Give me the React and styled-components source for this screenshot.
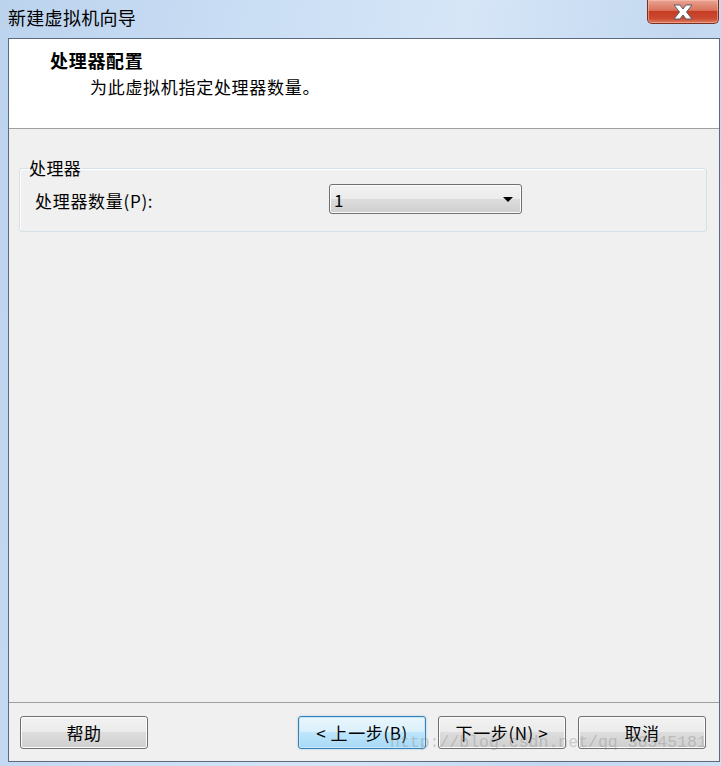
import React from "react";
import styled, { createGlobalStyle } from "styled-components";

const GlobalStyle = createGlobalStyle`
  html, body { margin: 0; padding: 0; background: #cfe0f4; }
  body {
    font-family: "Noto Sans CJK SC", "Noto Sans", "Liberation Sans", sans-serif;
    color: #000;
  }
`;

const Window = styled.div`
  position: relative;
  width: 721px;
  height: 766px;
  box-sizing: border-box;
  display: flex;
  flex-direction: column;
  padding: 0 1px 4px 8px;
  background: linear-gradient(
    100deg,
    #bcd3ee 0%,
    #cadef4 30%,
    #d6e6f7 55%,
    #c3d8f0 80%,
    #cde0f5 100%
  );
  overflow: hidden;
`;

const TitleBar = styled.div`
  height: 38px;
  flex: none;
  display: flex;
  justify-content: space-between;
  align-items: flex-start;
`;

const TitleText = styled.div`
  font-size: 18px;
  line-height: 24px;
  margin-top: 5px;
  letter-spacing: 0.3px;
  color: #000;
`;

const CloseButton = styled.div`
  width: 72px;
  height: 24px;
  margin-right: 1px;
  box-sizing: border-box;
  border: 1px solid #7a2f22;
  border-top: none;
  border-radius: 0 0 5px 5px;
  background: linear-gradient(
    #e8a493 0%,
    #d9735c 45%,
    #c63d24 50%,
    #cb4a30 80%,
    #dd7a5e 100%
  );
  box-shadow: inset 0 0 0 1px rgba(255, 200, 180, 0.5);
  display: flex;
  align-items: center;
  justify-content: center;
`;

const Client = styled.div`
  flex: 1;
  display: flex;
  flex-direction: column;
  border: 1px solid #5b6a7c;
  background: #f0f0f0;
  min-height: 0;
`;

const Header = styled.div`
  height: 89px;
  flex: none;
  background: #fff;
  border-bottom: 1px solid #a0a0a0;
  display: flex;
  flex-direction: column;
`;

const HeaderTitle = styled.div`
  font-size: 18px;
  font-weight: bold;
  line-height: 24px;
  letter-spacing: 0.7px;
  margin: 9px 0 0 41px;
`;

const HeaderSub = styled.div`
  font-size: 17px;
  line-height: 24px;
  letter-spacing: 0.7px;
  margin: 3px 0 0 81px;
`;

const Body = styled.div`
  flex: 1;
  padding: 29px 12px 0 10px;
`;

const GroupBox = styled.fieldset`
  margin: 0;
  padding: 6px 15px 17px 15px;
  border: 1px solid #d5dfe5;
  border-radius: 3px;
  box-shadow: inset 1px 1px 0 #fff;
`;

const GroupLegend = styled.legend`
  font-size: 17px;
  line-height: 20px;
  letter-spacing: 0.4px;
  padding: 0 1px;
  margin-left: -7px;
`;

const FieldRow = styled.div`
  display: grid;
  grid-template-columns: 294px 193px;
  align-items: center;
`;

const FieldLabel = styled.span`
  font-size: 17px;
  line-height: 24px;
  letter-spacing: 0.7px;
  padding-top: 3px;
`;

const Combo = styled.div`
  height: 30px;
  box-sizing: border-box;
  border: 1px solid #707070;
  border-radius: 3px;
  background: linear-gradient(#f2f2f2 0%, #ebebeb 50%, #dddddd 50%, #cfcfcf 100%);
  box-shadow: inset 0 0 0 1px #fbfbfb;
  display: flex;
  align-items: center;
  justify-content: space-between;
  padding: 0 8px 0 4px;
  font-size: 17px;
`;

const Arrow = styled.span`
  width: 0;
  height: 0;
  border-left: 5px solid transparent;
  border-right: 5px solid transparent;
  border-top: 5px solid #000;
`;

const Footer = styled.div`
  flex: none;
  border-top: 1px solid #a0a0a0;
  padding: 13px 13px 12px 11px;
  display: flex;
  align-items: center;
  gap: 12px;
`;

const Spacer = styled.div`
  flex: 1;
`;

const Button = styled.div`
  width: 128px;
  height: 33px;
  box-sizing: border-box;
  border: 1px solid ${(p) => (p.$active ? "#3c7fb1" : "#707070")};
  border-radius: 3px;
  background: ${(p) =>
    p.$active
      ? "linear-gradient(#eaf6fd 0%, #d9f0fc 50%, #bee6fd 50%, #a7d9f5 100%)"
      : "linear-gradient(#f2f2f2 0%, #ebebeb 50%, #dddddd 50%, #cfcfcf 100%)"};
  box-shadow: ${(p) =>
    p.$active
      ? "inset 0 0 0 1px #c5e7fb, 0 0 2px rgba(60,160,230,0.5)"
      : "inset 0 0 0 1px #fbfbfb"};
  display: flex;
  align-items: center;
  justify-content: center;
  font-size: 17px;
  line-height: 22px;
  letter-spacing: 0.6px;
  white-space: pre;
  color: #000;
`;

const Watermark = styled.div`
  position: absolute;
  left: 390px;
  top: 731px;
  font-family: "Liberation Mono", "DejaVu Sans Mono", monospace;
  font-size: 16.5px;
  line-height: 24px;
  color: rgba(140, 140, 140, 0.4);
  pointer-events: none;
  white-space: nowrap;
`;

export default function App() {
  return (
    <>
      <GlobalStyle />
      <Window>
        <TitleBar>
          <TitleText>新建虚拟机向导</TitleText>
          <CloseButton>
            <svg width="28" height="18" viewBox="0 0 28 18">
              <path
                d="M5 2 H11 L14 6 L17 2 H23 L17.5 9 L23 16 H17 L14 12 L11 16 H5 L10.5 9 Z"
                fill="#fff"
                stroke="#5a5a6a"
                strokeWidth="1"
                strokeLinejoin="round"
              />
            </svg>
          </CloseButton>
        </TitleBar>
        <Client>
          <Header>
            <HeaderTitle>处理器配置</HeaderTitle>
            <HeaderSub>为此虚拟机指定处理器数量。</HeaderSub>
          </Header>
          <Body>
            <GroupBox>
              <GroupLegend>处理器</GroupLegend>
              <FieldRow>
                <FieldLabel>处理器数量(P):</FieldLabel>
                <Combo>
                  <span>1</span>
                  <Arrow />
                </Combo>
              </FieldRow>
            </GroupBox>
          </Body>
          <Footer>
            <Button>帮助</Button>
            <Spacer />
            <Button $active>{"< 上一步(B)"}</Button>
            <Button>{"下一步(N) >"}</Button>
            <Button>取消</Button>
          </Footer>
        </Client>
        <Watermark>http://blog.csdn.net/qq_36345181</Watermark>
      </Window>
    </>
  );
}
